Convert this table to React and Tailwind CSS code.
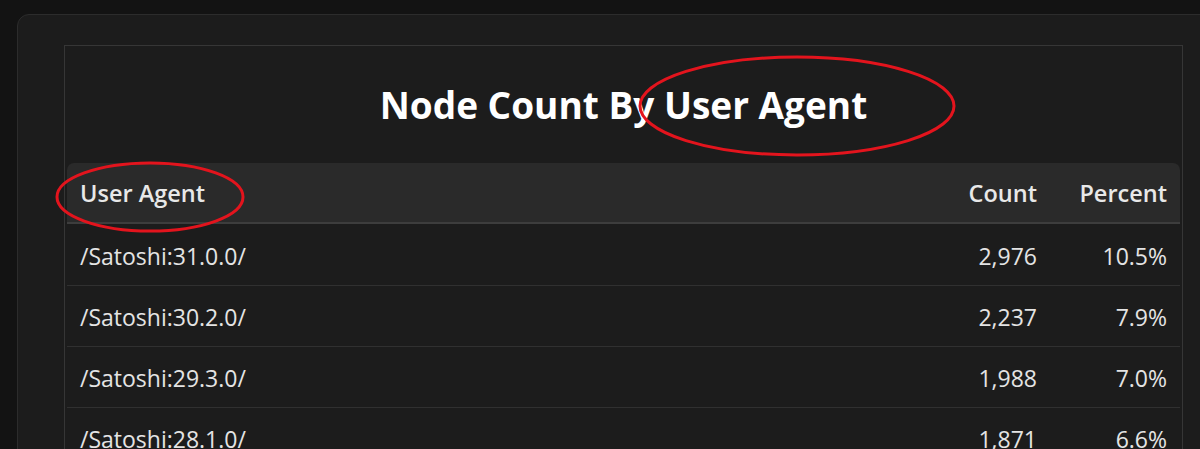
const rows = [
    { agent: '/Satoshi:31.0.0/', count: 2976, percent: '10.5%' },
    { agent: '/Satoshi:30.2.0/', count: 2237, percent: '7.9%' },
    { agent: '/Satoshi:29.3.0/', count: 1988, percent: '7.0%' },
    { agent: '/Satoshi:28.1.0/', count: 1871, percent: '6.6%' },
]

/**
 * Node count table - user agent breakdown, with review annotations on top
 */
export default function App() {
    return (
        <div className="relative h-[449px] w-full overflow-hidden bg-[#131313] pl-[17px] pt-[14px] font-['Open_Sans',sans-serif]">
            <div className="h-[600px] w-[1240px] rounded-[12px] border border-[#2c2c2c] bg-[#1c1c1c] pl-[46px] pt-[30px]">
                <div className="h-[600px] w-[1119px] border border-[#363636] px-[2px]">
                    <h2 className="pt-[35px] pb-[34px] text-center text-[37px] leading-[48px] font-bold text-white">
                        Node Count By User Agent
                    </h2>

                    <div className="flex h-[61px] items-center rounded-t-[7px] border-b-2 border-[#3d3d3d] bg-[#2a2a2a] pt-[2px] text-[23.5px] font-semibold text-[#e8e8e8]">
                        <div className="flex-1 pl-[13px]">User Agent</div>
                        <div className="w-[140px] text-right">Count</div>
                        <div className="w-[143px] pr-[13px] text-right">Percent</div>
                    </div>

                    <div className="pt-[1px]">
                        {rows.map(row => (
                            <Row key={row.agent} {...row} />
                        ))}
                    </div>
                </div>
            </div>

            {/* Annotations */}
            <svg
                className="pointer-events-none absolute left-0 top-0"
                width="1200"
                height="449"
                viewBox="0 0 1200 449"
            >
                <ellipse cx="797" cy="106" rx="157" ry="49" fill="none" stroke="#e3141d" strokeWidth="3" />
                <ellipse cx="150" cy="197" rx="93" ry="34" fill="none" stroke="#e3141d" strokeWidth="3" />
            </svg>
        </div>
    )
}

function Row({ agent, count, percent }) {
    return (
        <div className="flex h-[61px] items-center border-b border-[#303030] pt-[3px] text-[23px] text-[#e4e4e4]">
            <div className="flex-1 pl-[13px]">{agent}</div>
            <div className="w-[140px] text-right">{count.toLocaleString('en-US')}</div>
            <div className="w-[143px] pr-[13px] text-right">{percent}</div>
        </div>
    )
}
